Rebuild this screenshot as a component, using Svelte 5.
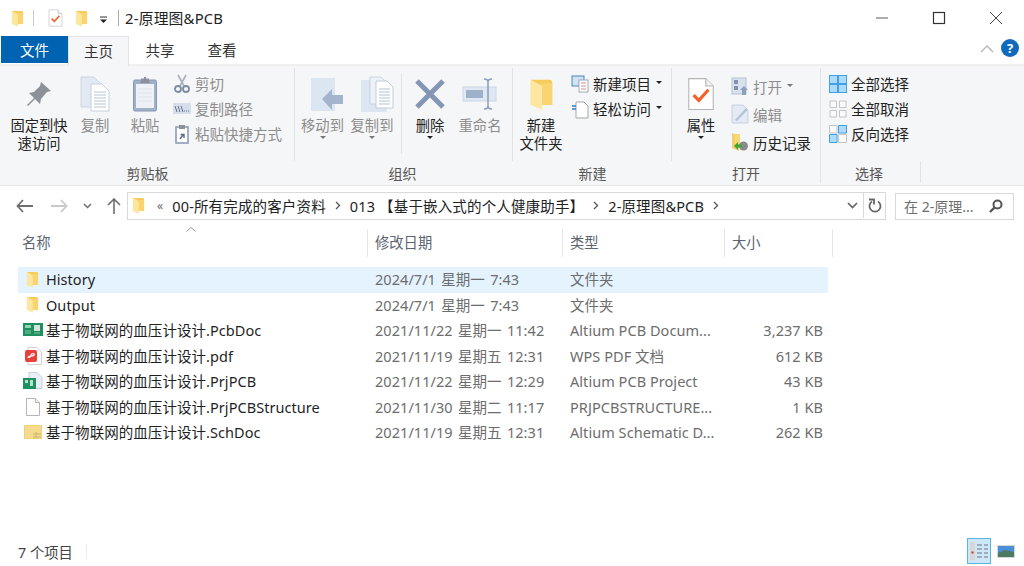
<script>
  const files = [
    { name: "History", date: "2024/7/1 星期一 7:43", type: "文件夹", size: "", icon: "folder", selected: true },
    { name: "Output", date: "2024/7/1 星期一 7:43", type: "文件夹", size: "", icon: "folder" },
    { name: "基于物联网的血压计设计.PcbDoc", date: "2021/11/22 星期一 11:42", type: "Altium PCB Docum...", size: "3,237 KB", icon: "pcb" },
    { name: "基于物联网的血压计设计.pdf", date: "2021/11/19 星期五 12:31", type: "WPS PDF 文档", size: "612 KB", icon: "pdf" },
    { name: "基于物联网的血压计设计.PrjPCB", date: "2021/11/22 星期一 12:29", type: "Altium PCB Project", size: "43 KB", icon: "prj" },
    { name: "基于物联网的血压计设计.PrjPCBStructure", date: "2021/11/30 星期二 11:17", type: "PRJPCBSTRUCTURE...", size: "1 KB", icon: "blank" },
    { name: "基于物联网的血压计设计.SchDoc", date: "2021/11/19 星期五 12:31", type: "Altium Schematic D...", size: "262 KB", icon: "sch" },
  ];
</script>

{#snippet folder(w, h)}
  <svg width={w} height={h} viewBox="0 0 14 18">
    <path d="M1 1h11l1 1v13H1z" fill="#f5cb5c" />
    <path d="M1 1l5.500 3c.6.3 .9.8 .9 1.500V18L2 15.500c-.6-.3-1-.7-1-1.300z" fill="#fde6a0" />
    <path d="M6.500 3H13v12H7.400V5.500z" fill="#f9d470" />
  </svg>
{/snippet}

{#snippet page(w, h, extra)}
  <svg width={w} height={h} viewBox="0 0 26 32">
    <path d="M1.500 1.500h16l7 7v22h-23z" fill="#fff" stroke="#b4b4b4" />
    <path d="M17.500 1.500v7h7" fill="#f0f0f0" stroke="#b4b4b4" />
    {#if extra}
      <path d="M6 17l5 5 9-10" fill="none" stroke="#f2622a" stroke-width="3" />
    {/if}
  </svg>
{/snippet}

<div class="window">
  <header class="titlebar">
    <span class="qa-folder">{@render folder(13, 17)}</span>
    <span class="qa-sep"></span>
    <span class="qa-check">{@render page(15, 18, true)}</span>
    <span class="qa-folder2">{@render folder(13, 17)}</span>
    <svg class="qa-drop" width="9" height="8" viewBox="0 0 9 8">
      <path d="M1 1h7" stroke="#333" /><path d="M1 3.500h7L4.500 7z" fill="#222" />
    </svg>
    <span class="qa-sep second"></span>
    <span class="title">2-原理图&PCB</span>
    <div class="win-buttons">
      <svg width="14" height="14" viewBox="0 0 14 14"><path d="M1 7h12" stroke="#8a8a8a" stroke-width="1.400" /></svg>
      <svg width="14" height="14" viewBox="0 0 14 14"><rect x="1.500" y="1.500" width="11" height="11" fill="none" stroke="#333" stroke-width="1.200" /></svg>
      <svg width="14" height="14" viewBox="0 0 14 14"><path d="M1 1l12 12M13 1L1 13" stroke="#444" stroke-width="1" /></svg>
    </div>
  </header>

  <nav class="tabs">
    <span class="tab file">文件</span>
    <span class="tab active">主页</span>
    <span class="tab">共享</span>
    <span class="tab">查看</span>
    <div class="tabs-right">
      <svg width="14" height="9" viewBox="0 0 14 9"><path d="M1 8l6-6 6 6" fill="none" stroke="#b5b5b5" stroke-width="1.300" /></svg>
      <span class="help">?</span>
    </div>
  </nav>

  <section class="ribbon">
    <div class="group clip">
      <div class="group-body">
        <div class="big pin">
          <span class="big-icon">
            <svg width="28" height="28" viewBox="0 0 28 28">
              <path d="M16 2l10 9-4 1-6 7-1 5-5-5-7 7-1-1 7-7-5-5 5-1 6-6z" fill="#8b9197" />
            </svg>
          </span>
          <span class="big-text">固定到快<br />速访问</span>
        </div>
        <div class="big copy muted">
          <span class="big-icon">
            <svg width="30" height="36" viewBox="0 0 30 36">
              <path d="M1 1h13l6 6v24H1z" fill="#e3e9f3" stroke="#cdd6e3" />
              <path d="M11 8h11l7 7v20H11z" fill="#fff" stroke="#c6d0de" />
              <path d="M14 16h12M14 19h12M14 22h12M14 25h12M14 28h12M14 31h12" stroke="#b9c4d4" />
            </svg>
          </span>
          <span class="big-text">复制</span>
        </div>
        <div class="big paste muted">
          <span class="big-icon">
            <svg width="26" height="36" viewBox="0 0 26 36">
              <rect x="1.500" y="4" width="23" height="31" rx="1.500" fill="#9fb0c9" stroke="#8698b5" />
              <rect x="4" y="8" width="18" height="24" fill="#eef2f7" />
              <path d="M9 5V2.500h3V1h2v1.500h3V5l1 2H8z" fill="#8c9199" />
              <path d="M6 13h14M6 17h14M6 21h14M6 25h14" stroke="#dde3ec" />
            </svg>
          </span>
          <span class="big-text">粘贴</span>
        </div>
        <div class="small-col muted">
          <div class="small">
            <svg width="18" height="20" viewBox="0 0 18 20">
              <path d="M5 1l6 11M13 1L7 12" stroke="#a9b0ba" stroke-width="1.600" />
              <circle cx="5" cy="15" r="3" fill="none" stroke="#7d8ca3" stroke-width="1.800" />
              <circle cx="13" cy="15" r="3" fill="none" stroke="#7d8ca3" stroke-width="1.800" />
            </svg>
            <span>剪切</span>
          </div>
          <div class="small">
            <svg width="18" height="12" viewBox="0 0 18 12">
              <rect width="18" height="11" fill="#d5deea" />
              <path d="M2 3l2 6M5 3l2 6M8 3l2 6" stroke="#65738a" />
              <path d="M11 8h1M13 8h1M15 8h1" stroke="#65738a" />
            </svg>
            <span>复制路径</span>
          </div>
          <div class="small">
            <svg width="14" height="20" viewBox="0 0 14 20">
              <rect x="1" y="3" width="12" height="16" fill="#fff" stroke="#8c9db6" stroke-width="1.600" />
              <rect x="4" y="1" width="6" height="4" fill="#8c9199" />
              <path d="M5 15l3-4M5.500 10.500H9V14" fill="none" stroke="#5a6b85" stroke-width="1.400" />
            </svg>
            <span>粘贴快捷方式</span>
          </div>
        </div>
      </div>
      <div class="group-label">剪贴板</div>
    </div>

    <div class="group organize">
      <div class="group-body">
        <div class="big move muted">
          <span class="big-icon">
            <svg width="34" height="34" viewBox="0 0 34 34">
              <rect x="1" y="1" width="24" height="33" fill="#dce5f2" />
              <path d="M12 22l10-10v6h11v9H22v6z" fill="#a4b4cd" />
            </svg>
          </span>
          <span class="big-text">移动到</span>
          <span class="caret grey"></span>
        </div>
        <div class="big moveto muted">
          <span class="big-icon">
            <svg width="34" height="36" viewBox="0 0 34 36">
              <rect x="1" y="4" width="26" height="32" fill="#dce5f2" />
              <path d="M10 1h11l5 5v22H10z" fill="#eef2f8" stroke="#c9d3e1" />
              <path d="M16 5h11l6 6v21H16z" fill="#fff" stroke="#c1ccdc" />
              <path d="M19 13h11M19 16h11M19 19h11M19 22h11M19 25h11M19 28h11" stroke="#b5c1d2" />
            </svg>
          </span>
          <span class="big-text">复制到</span>
          <span class="caret grey"></span>
        </div>
        <span class="inner-sep"></span>
        <div class="big delete">
          <span class="big-icon">
            <svg width="32" height="32" viewBox="0 0 32 32">
              <path d="M3 3l26 26M29 3L3 29" stroke="#8396b3" stroke-width="5" />
            </svg>
          </span>
          <span class="big-text">删除</span>
          <span class="caret"></span>
        </div>
        <div class="big rename muted">
          <span class="big-icon">
            <svg width="36" height="34" viewBox="0 0 36 34">
              <rect x="1" y="10" width="33" height="14" fill="#dfe7f3" stroke="#c9d5e6" />
              <rect x="4" y="13" width="17" height="8" fill="#9fb0c9" />
              <path d="M22 2q4 0 4 3v24q0 3-4 3M30 2q-4 0-4 3v24q0 3 4 3" fill="none" stroke="#8a9cb8" stroke-width="1.500" />
            </svg>
          </span>
          <span class="big-text">重命名</span>
        </div>
      </div>
      <div class="group-label">组织</div>
    </div>

    <div class="group create">
      <div class="group-body">
        <div class="big newfolder">
          <span class="big-icon">{@render folder(25, 34)}</span>
          <span class="big-text">新建<br />文件夹</span>
        </div>
        <div class="small-col">
          <div class="small">
            <svg width="18" height="18" viewBox="0 0 18 18">
              <rect x="1" y="1" width="12" height="10" fill="#cfe3f4" stroke="#4d86b8" />
              <rect x="8" y="5" width="9" height="12" fill="#fff" stroke="#a0a9b5" />
              <path d="M10 8h5M10 11h5M10 14h5" stroke="#c98f8f" />
            </svg>
            <span>新建项目</span><span class="caret inline"></span>
          </div>
          <div class="small">
            <svg width="18" height="20" viewBox="0 0 18 20">
              <path d="M5 3h8l4 4v12H5z" fill="#fff" stroke="#a5a5a5" />
              <path d="M1 7h4M1 10h4" stroke="#2f7fc4" stroke-width="1.400" />
            </svg>
            <span>轻松访问</span><span class="caret inline"></span>
          </div>
        </div>
      </div>
      <div class="group-label">新建</div>
    </div>

    <div class="group open">
      <div class="group-body">
        <div class="big props">
          <span class="big-icon">{@render page(28, 34, true)}</span>
          <span class="big-text">属性</span>
          <span class="caret"></span>
        </div>
        <div class="small-col">
          <div class="small muted">
            <svg width="18" height="18" viewBox="0 0 18 18">
              <rect x="1" y="1" width="14" height="16" fill="#d8e1ee" stroke="#b4c1d3" />
              <rect x="3" y="3" width="4" height="4" fill="#8093ad" />
              <rect x="3" y="9" width="4" height="4" fill="#8093ad" />
              <path d="M13 9l4 4h-2v5h-4v-5H9z" fill="#8ba0bd" />
            </svg>
            <span>打开</span><span class="caret inline grey"></span>
          </div>
          <div class="small muted">
            <svg width="18" height="20" viewBox="0 0 18 20">
              <path d="M1 1h11l5 5v13H1z" fill="#e3eaf4" stroke="#c6d1e0" />
              <path d="M4 16L15 4l1.500 2L6 17z" fill="#b5c3d6" />
            </svg>
            <span>编辑</span>
          </div>
          <div class="small">
            <svg width="18" height="20" viewBox="0 0 18 20">
              <path d="M1 1l7 3v15l-7-3z" fill="#f3cf6d" />
              <path d="M4 2h5v12H4z" fill="#f8d775" />
              <circle cx="12.500" cy="14" r="4.500" fill="#8a8a8a" />
              <path d="M3 14l4-4v2.500h4v3H7V18z" fill="#3fa535" />
            </svg>
            <span>历史记录</span>
          </div>
        </div>
      </div>
      <div class="group-label">打开</div>
    </div>

    <div class="group select">
      <div class="group-body">
        <div class="small-col">
          <div class="small">
            <svg width="18" height="18" viewBox="0 0 18 18">
              <rect width="18" height="18" fill="#42a0e8" />
              <path d="M1 1h7v7H1zM10 1h7v7h-7zM1 10h7v7H1zM10 10h7v7h-7z" fill="#aedbfa" />
            </svg>
            <span>全部选择</span>
          </div>
          <div class="small">
            <svg width="18" height="18" viewBox="0 0 18 18">
              <path d="M1 1h6.500v6.500H1zM10.500 1H17v6.500h-6.500zM1 10.500h6.500V17H1zM10.500 10.500H17V17h-6.500z" fill="#fafafa" stroke="#c4c4c4" />
            </svg>
            <span>全部取消</span>
          </div>
          <div class="small">
            <svg width="18" height="18" viewBox="0 0 18 18">
              <path d="M.5.5h7.500v7.500H.5z" fill="#fafafa" stroke="#c4c4c4" />
              <path d="M9.500.5H17.500V8H9.500zM.5 9.500H8V17.500H.5z" fill="#aedbfa" stroke="#42a0e8" />
              <path d="M9.500 9.500H17.500V17.500H9.500z" fill="#fafafa" stroke="#c4c4c4" />
            </svg>
            <span>反向选择</span>
          </div>
        </div>
      </div>
      <div class="group-label">选择</div>
    </div>
  </section>

  <div class="addressbar">
    <div class="nav">
      <svg width="17" height="14" viewBox="0 0 17 14"><path d="M7 1L1.500 7 7 13M2 7h15" fill="none" stroke="#6e6e6e" stroke-width="1.800" /></svg>
      <svg width="17" height="14" viewBox="0 0 17 14"><path d="M10 1l5.500 6L10 13M15 7H0" fill="none" stroke="#c9c9c9" stroke-width="1.800" /></svg>
      <svg class="recent" width="9" height="6" viewBox="0 0 9 6"><path d="M1 1l3.500 3.500L8 1" fill="none" stroke="#6e6e6e" stroke-width="1.500" /></svg>
      <svg width="14" height="16" viewBox="0 0 14 16"><path d="M1 7l6-6 6 6M7 1v15" fill="none" stroke="#6e6e6e" stroke-width="1.600" /></svg>
    </div>
    <div class="path">
      <span class="path-folder">{@render folder(13, 17)}</span>
      <span class="crumb-more">«</span>
      <span>00-所有完成的客户资料</span>
      <svg class="chev" width="6" height="9" viewBox="0 0 6 9"><path d="M1 1l3.500 3.500L1 8" fill="none" stroke="#555" stroke-width="1.300" /></svg>
      <span>013 【基于嵌入式的个人健康助手】</span>
      <svg class="chev" width="6" height="9" viewBox="0 0 6 9"><path d="M1 1l3.500 3.500L1 8" fill="none" stroke="#555" stroke-width="1.300" /></svg>
      <span>2-原理图&PCB</span>
      <svg class="chev" width="6" height="9" viewBox="0 0 6 9"><path d="M1 1l3.500 3.500L1 8" fill="none" stroke="#555" stroke-width="1.300" /></svg>
      <span class="path-end">
        <svg width="11" height="7" viewBox="0 0 11 7"><path d="M1 1l4.500 4.500L10 1" fill="none" stroke="#666" stroke-width="1.700" /></svg>
      </span>
      <span class="path-refresh">
        <svg width="14" height="15" viewBox="0 0 14 15"><path d="M4 3.500a5.500 5.500 0 1 0 6 0" fill="none" stroke="#666" stroke-width="1.800" /><path d="M1 1.500h5v5" fill="none" stroke="#666" stroke-width="1.800" /></svg>
      </span>
    </div>
    <div class="search">
      <span>在 2-原理...</span>
      <svg width="14" height="14" viewBox="0 0 14 14"><circle cx="8.500" cy="5.500" r="4" fill="none" stroke="#555" stroke-width="2" /><path d="M5.500 8.500L1 13" stroke="#555" stroke-width="2.400" /></svg>
    </div>
  </div>

  <div class="list-head">
    <span class="sort-arrow"><svg width="10" height="5" viewBox="0 0 10 5"><path d="M.5 4.500L5 .5l4.500 4" fill="none" stroke="#9a9a9a" /></svg></span>
    <span class="col first">名称</span>
    <span class="col">修改日期</span>
    <span class="col">类型</span>
    <span class="col">大小</span>
  </div>

  <div class="list">
    {#each files as f}
      <div class="row" class:selected={f.selected}>
        <span class="file-icon">
          {#if f.icon === "folder"}
            {@render folder(13, 17)}
          {:else if f.icon === "pcb"}
            <svg width="20" height="16" viewBox="0 0 20 16">
              <rect y="1" width="20" height="13" fill="#1f8f5f" />
              <rect x="2" y="3" width="6" height="3" fill="#8fd6b0" />
              <rect x="11" y="3" width="6" height="6" fill="#d5e3dc" />
              <path d="M2 9h6M2 11h6M11 11h6" stroke="#7cc9a0" />
            </svg>
          {:else if f.icon === "pdf"}
            <svg width="18" height="18" viewBox="0 0 18 18">
              <path d="M4 .5h9l4.500 4.500v12.500H4z" fill="#fff" stroke="#d0d0d0" />
              <rect x="1" y="3" width="12" height="12" rx="2" fill="#e8413c" />
              <path d="M4 10c2 1 3-1 3-2s2-2 3-1-1 2-3 2-3 1-3 2" fill="none" stroke="#fff" stroke-width="1.200" />
            </svg>
          {:else if f.icon === "prj"}
            <svg width="20" height="18" viewBox="0 0 20 18">
              <path d="M6 .5h8l5 5v11H6z" fill="#e9eef5" stroke="#c3cedc" />
              <rect y="6" width="13" height="11" fill="#1f8f5f" />
              <rect x="2" y="8" width="3" height="3" fill="#b8e3cb" />
              <rect x="7" y="8" width="3" height="6" fill="#b8e3cb" />
            </svg>
          {:else if f.icon === "blank"}
            <svg width="14" height="18" viewBox="0 0 14 18">
              <path d="M.5.5h9l4 4v13H.5z" fill="#fff" stroke="#b5b5b5" />
              <path d="M9.500.5v4h4" fill="#f0f0f0" stroke="#b5b5b5" />
            </svg>
          {:else}
            <svg width="18" height="14" viewBox="0 0 18 14">
              <rect width="18" height="14" fill="#f5dc8c" stroke="#e6c86e" />
              <path d="M9 9h8M9 12h8M12 7v6" stroke="#cdb26a" />
            </svg>
          {/if}
        </span>
        <span class="name">{f.name}</span>
        <span class="meta date">{f.date}</span>
        <span class="meta">{f.type}</span>
        <span class="meta size">{f.size}</span>
      </div>
    {/each}
  </div>

  <footer class="status">
    <span class="count">7 个项目</span>
    <span class="status-sep"></span>
    <div class="views">
      <span class="view on">
        <svg width="18" height="18" viewBox="0 0 18 18">
          <rect width="5" height="18" fill="#d7d7d7" />
          <path d="M7 3h5M14 3h4M7 7h5M14 7h4M7 11h5M14 11h4M7 15h5M14 15h4" stroke="#8c9aa8" stroke-width="1.300" />
          <rect x="1.500" y="9.500" width="2" height="2" fill="#c0392b" />
        </svg>
      </span>
      <span class="view">
        <svg width="18" height="13" viewBox="0 0 18 13">
          <rect width="18" height="13" fill="#d8d8d8" />
          <rect x="1" y="1" width="16" height="11" fill="#4a90d9" />
          <path d="M1 8l7-3 9 2v5H1z" fill="#4d7a63" />
        </svg>
      </span>
    </div>
  </footer>
</div>

<style>
  :global(body) {
    margin: 0;
    background: #fff;
  }

  .window {
    width: 1024px;
    height: 566px;
    position: relative;
    overflow: hidden;
    font-family: "Noto Sans", "Noto Sans CJK SC", sans-serif;
    font-size: 14.500px;
    color: #222;
    background: #fff;
  }

  /* Title bar */
  .titlebar {
    height: 36px;
    display: flex;
    align-items: center;
    box-sizing: border-box;
  }
  .titlebar svg {
    display: block;
  }
  .qa-folder {
    margin-left: 11px;
  }
  .qa-sep {
    width: 1px;
    height: 16px;
    background: #c9c9c9;
    margin-left: 9px;
  }
  .qa-sep.second {
    margin-left: 10px;
    background: #aaa;
  }
  .qa-check {
    margin-left: 14px;
  }
  .qa-folder2 {
    margin-left: 12px;
  }
  .qa-drop {
    margin-left: 11px;
    margin-top: 3px;
  }
  .title {
    margin-left: 6px;
    font-size: 14.800px;
    letter-spacing: 0.2px;
    line-height: 36px;
  }
  .win-buttons {
    margin-left: auto;
    display: flex;
    gap: 43px;
    padding-right: 21px;
    align-items: center;
  }

  /* Tabs */
  .tabs {
    height: 30px;
    display: flex;
    position: relative;
    border-bottom: 2px solid #f0f0f0;
    box-sizing: border-box;
  }
  .tab {
    width: 62px;
    height: 27px;
    line-height: 28px;
    text-align: center;
    font-size: 14.500px;
    color: #333;
  }
  .tab.file {
    margin-left: 1px;
    width: 67px;
    background: #0063b1;
    color: #fff;
  }
  .tab.active {
    width: 61px;
    height: 30px;
    box-sizing: border-box;
    background: #f5f6f7;
    border: 1px solid #e4e4e4;
    border-bottom: none;
  }
  .tabs-right {
    margin-left: auto;
    display: flex;
    align-items: center;
    gap: 7px;
    padding: 0 5px 4px 0;
  }
  .help {
    width: 18px;
    height: 18px;
    border-radius: 50%;
    background: #0f6cbd;
    color: #fff;
    font-size: 13px;
    font-weight: 700;
    line-height: 18px;
    text-align: center;
  }

  /* Ribbon */
  .ribbon {
    height: 120px;
    box-sizing: border-box;
    background: #f5f6f7;
    border-bottom: 1px solid #e6e6e6;
    display: flex;
  }
  .group {
    display: flex;
    flex-direction: column;
    box-sizing: border-box;
    margin-top: 2px;
    margin-bottom: 2px;
  }
  .group.clip {
    width: 295px;
  }
  .group.organize {
    width: 218px;
  }
  .group.create {
    width: 159px;
  }
  .group.open {
    width: 149px;
    border-right: 1px solid #e2e3e4;
  }
  .group.select {
    width: 100px;
  }
  .group-body {
    height: 93px;
    box-sizing: border-box;
    display: flex;
    flex: none;
    border-right: 1px solid #e2e3e4;
  }
  .group.open .group-body,
  .group.select .group-body {
    border-right: none;
  }
  .group.select .group-label {
    border-right: 1px solid #e2e3e4;
  }
  .group-label {
    flex: 1;
    text-align: center;
    font-size: 14px;
    line-height: 19px;
    color: #555;
    padding-top: 3px;
  }
  .group.organize .group-label,
  .group.select .group-label {
    padding-right: 3px;
  }
  .big {
    display: flex;
    flex-direction: column;
    align-items: center;
    flex: none;
    line-height: 18px;
    font-size: 14.300px;
  }
  .big-icon {
    height: 45px;
    padding-top: 7px;
    box-sizing: border-box;
    display: flex;
    align-items: center;
    justify-content: center;
    margin-bottom: 4px;
  }
  .big-text {
    text-align: center;
    white-space: nowrap;
  }
  .muted {
    color: #8d8d8d;
  }
  .big.pin {
    width: 68px;
    margin-left: 5px;
  }
  .big.copy {
    width: 44px;
  }
  .big.paste {
    width: 56px;
  }
  .big.move {
    width: 49px;
    margin-left: 3px;
  }
  .big.move .big-icon {
    padding-left: 8px;
  }
  .big.moveto {
    width: 50px;
    margin-right: 2px;
  }
  .big.moveto .big-icon {
    padding-left: 10px;
  }
  .inner-sep {
    width: 1px;
    height: 80px;
    margin: 6px 3px 0 2px;
    background: #e2e3e4;
  }
  .big.delete {
    width: 50px;
  }
  .big.rename {
    width: 48px;
    margin-left: 1px;
  }
  .big.newfolder {
    width: 54px;
    margin-left: 1px;
  }
  .big.props {
    width: 56px;
    margin-left: 1px;
  }
  .caret {
    width: 0;
    height: 0;
    border-left: 3px solid transparent;
    border-right: 3px solid transparent;
    border-top: 3px solid #222;
    margin-top: 1px;
  }
  .caret.grey {
    border-top-color: #777;
  }
  .caret.inline {
    margin: 0 0 0 5px;
    align-self: center;
    transform: translateY(-1px);
  }
  .small-col {
    display: flex;
    flex-direction: column;
    padding-top: 3px;
    margin-left: 5px;
  }
  .small {
    height: 25px;
    display: flex;
    align-items: center;
    white-space: nowrap;
    font-size: 14.500px;
  }
  .small svg {
    flex: none;
    width: 18px;
    margin-right: 4px;
  }
  .group.clip .small-col {
    margin-left: 0;
  }
  .group.create .small-col {
    margin-left: 3px;
    padding-top: 3px;
  }
  .group.open .small-col {
    margin-left: 2px;
    padding-top: 4px;
  }
  .group.open .small {
    height: 28px;
  }
  .group.select .small-col {
    margin-left: 8px;
    padding-top: 3px;
  }

  /* Address bar */
  .addressbar {
    height: 40px;
    display: flex;
    align-items: center;
    box-sizing: border-box;
  }
  .nav {
    width: 127px;
    display: flex;
    align-items: center;
    padding-left: 16px;
    box-sizing: border-box;
    gap: 18px;
  }
  .nav .recent {
    margin-left: -3px;
    margin-right: -3px;
  }
  .path {
    width: 759px;
    height: 28px;
    box-sizing: border-box;
    border: 1px solid #d9d9d9;
    padding-bottom: 1px;
    display: flex;
    align-items: center;
    font-size: 14.500px;
    letter-spacing: 0.15px;
    white-space: nowrap;
  }
  .path-folder {
    display: flex;
    margin: 0 12px 0 4px;
  }
  .crumb-more {
    color: #666;
    font-size: 12px;
    margin-right: 9px;
  }
  .chev {
    margin: 0 9px;
    flex: none;
  }
  .path-end {
    margin-left: auto;
    display: flex;
    align-items: center;
    justify-content: center;
    width: 22px;
    height: 100%;
    border-right: 1px solid #d9d9d9;
  }
  .path-refresh {
    width: 21px;
    display: flex;
    justify-content: center;
  }
  .search {
    margin-left: 9px;
    width: 119px;
    height: 27px;
    box-sizing: border-box;
    border: 1px solid #d9d9d9;
    display: flex;
    align-items: center;
    justify-content: space-between;
    padding: 0 10px 0 8px;
    color: #6d6d6d;
    font-size: 14px;
  }

  /* File list */
  .list-head {
    position: relative;
    height: 28px;
    margin-top: 3px;
    display: grid;
    grid-template-columns: 368px 195px 162px 108px;
    width: 833px;
    font-size: 14.300px;
    color: #5b6470;
  }
  .sort-arrow {
    position: absolute;
    left: 186px;
    top: -2px;
    line-height: 0;
  }
  .col {
    border-right: 1px solid #e5e5e5;
    padding-left: 7px;
    line-height: 28px;
    box-sizing: border-box;
  }
  .col.first {
    padding-left: 22px;
  }
  .list {
    margin-top: 10px;
    width: 810px;
    margin-left: 18px;
  }
  .row {
    height: 25.500px;
    box-sizing: border-box;
    padding-bottom: 1px;
    display: grid;
    grid-template-columns: 28px 321px 195px 162px 104px;
    align-items: center;
    white-space: nowrap;
    font-size: 14.500px;
    letter-spacing: 0.05px;
    line-height: 24px;
  }
  .row.selected {
    background: #e5f3ff;
  }
  .file-icon {
    display: flex;
    align-items: center;
    justify-content: center;
    padding-left: 1px;
  }
  .name {
    color: #1f1f1f;
  }
  .meta {
    color: #6d6d6d;
    padding-left: 8px;
    overflow: hidden;
  }
  .meta.date {
    word-spacing: 1.500px;
  }
  .size {
    text-align: right;
    padding-right: 5px;
    padding-left: 0;
  }

  /* Status bar */
  .status {
    position: absolute;
    left: 0;
    right: 0;
    bottom: 0;
    height: 30px;
    display: flex;
    align-items: center;
    padding-left: 18px;
    font-size: 14.300px;
    color: #444;
  }
  .status-sep {
    width: 1px;
    height: 15px;
    background: #ececec;
    margin-left: 13px;
  }
  .views {
    margin-left: auto;
    display: flex;
    align-items: center;
    gap: 3px;
    padding-right: 6px;
  }
  .view {
    width: 24px;
    height: 26px;
    display: flex;
    align-items: center;
    justify-content: center;
    box-sizing: border-box;
  }
  .view.on {
    background: #cce8f7;
    border: 1px solid #5eb4e0;
  }
</style>
